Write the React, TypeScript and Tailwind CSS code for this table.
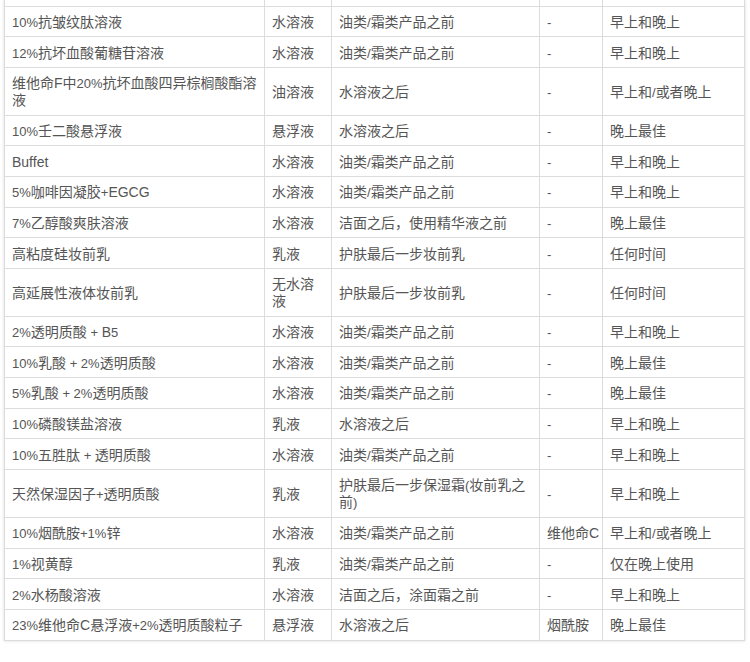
const rows: string[][] = [
  ['10%抗皱纹肽溶液', '水溶液', '油类/霜类产品之前', '-', '早上和晚上'],
  ['12%抗坏血酸葡糖苷溶液', '水溶液', '油类/霜类产品之前', '-', '早上和晚上'],
  ['维他命F中20%抗坏血酸四异棕榈酸酯溶\n液', '油溶液', '水溶液之后', '-', '早上和/或者晚上'],
  ['10%壬二酸悬浮液', '悬浮液', '水溶液之后', '-', '晚上最佳'],
  ['Buffet', '水溶液', '油类/霜类产品之前', '-', '早上和晚上'],
  ['5%咖啡因凝胶+EGCG', '水溶液', '油类/霜类产品之前', '-', '早上和晚上'],
  ['7%乙醇酸爽肤溶液', '水溶液', '洁面之后，使用精华液之前', '-', '晚上最佳'],
  ['高粘度硅妆前乳', '乳液', '护肤最后一步妆前乳', '-', '任何时间'],
  ['高延展性液体妆前乳', '无水溶\n液', '护肤最后一步妆前乳', '-', '任何时间'],
  ['2%透明质酸 + B5', '水溶液', '油类/霜类产品之前', '-', '早上和晚上'],
  ['10%乳酸 + 2%透明质酸', '水溶液', '油类/霜类产品之前', '-', '晚上最佳'],
  ['5%乳酸 + 2%透明质酸', '水溶液', '油类/霜类产品之前', '-', '晚上最佳'],
  ['10%磷酸镁盐溶液', '乳液', '水溶液之后', '-', '早上和晚上'],
  ['10%五胜肽 + 透明质酸', '水溶液', '油类/霜类产品之前', '-', '早上和晚上'],
  ['天然保湿因子+透明质酸', '乳液', '护肤最后一步保湿霜(妆前乳之\n前)', '-', '早上和晚上'],
  ['10%烟酰胺+1%锌', '水溶液', '油类/霜类产品之前', '维他命C', '早上和/或者晚上'],
  ['1%视黄醇', '乳液', '油类/霜类产品之前', '-', '仅在晚上使用'],
  ['2%水杨酸溶液', '水溶液', '洁面之后，涂面霜之前', '-', '早上和晚上'],
  ['23%维他命C悬浮液+2%透明质酸粒子', '悬浮液', '水溶液之后', '烟酰胺', '晚上最佳'],
]

const latin = { fontFamily: '"Liberation Sans", sans-serif' }

// latin letters keep full size, digits and symbols are a bit narrower like in the shot
function Text({ value }: { value: string }) {
  return (
    <>
      {value.split('\n').map((line, i) => (
        <span key={i}>
          {i > 0 && <br />}
          {line.split(/([A-Za-z]+|[\x20-\x40\x5b-\x60\x7b-\x7e]+)/).filter(Boolean).map((part, k) =>
            /^[A-Za-z]+$/.test(part)
              ? <span key={k} className="text-[14px] leading-[10px]" style={latin}>{part}</span>
              : /^[\x20-\x7e]+$/.test(part)
                ? <span key={k} className="text-[13px] leading-[10px]" style={latin}>{part}</span>
                : <span key={k}>{part}</span>
          )}
        </span>
      ))}
    </>
  )
}

const cell = 'border border-[#dcdcdc] px-[7px] py-[6.35px] align-middle whitespace-nowrap'

export default function App() {
  return (
    <div
      className="w-[750px] h-[662px] overflow-hidden bg-white"
      style={{ fontFamily: '"Noto Sans CJK SC", "Noto Sans", sans-serif' }}
    >
      <table className="ml-[4px] w-[740px] table-fixed border-collapse text-[14px] leading-[17px] text-[#555] shadow-[0_0_3px_rgba(0,0,0,0.15)]">
        <colgroup>
          <col className="w-[260px]" />
          <col className="w-[67px]" />
          <col className="w-[208px]" />
          <col className="w-[63px]" />
          <col className="w-[142px]" />
        </colgroup>
        <tbody>
          {/* tail of the row cut off above */}
          <tr className="h-[6px]">
            {[0, 1, 2, 3, 4].map(i => (
              <td key={i} className="border-x border-b border-[#dcdcdc] p-0" />
            ))}
          </tr>
          {rows.map((r, i) => (
            <tr key={i}>
              {r.map((c, j) => (
                <td key={j} className={cell}><Text value={c} /></td>
              ))}
            </tr>
          ))}
        </tbody>
      </table>
    </div>
  )
}
